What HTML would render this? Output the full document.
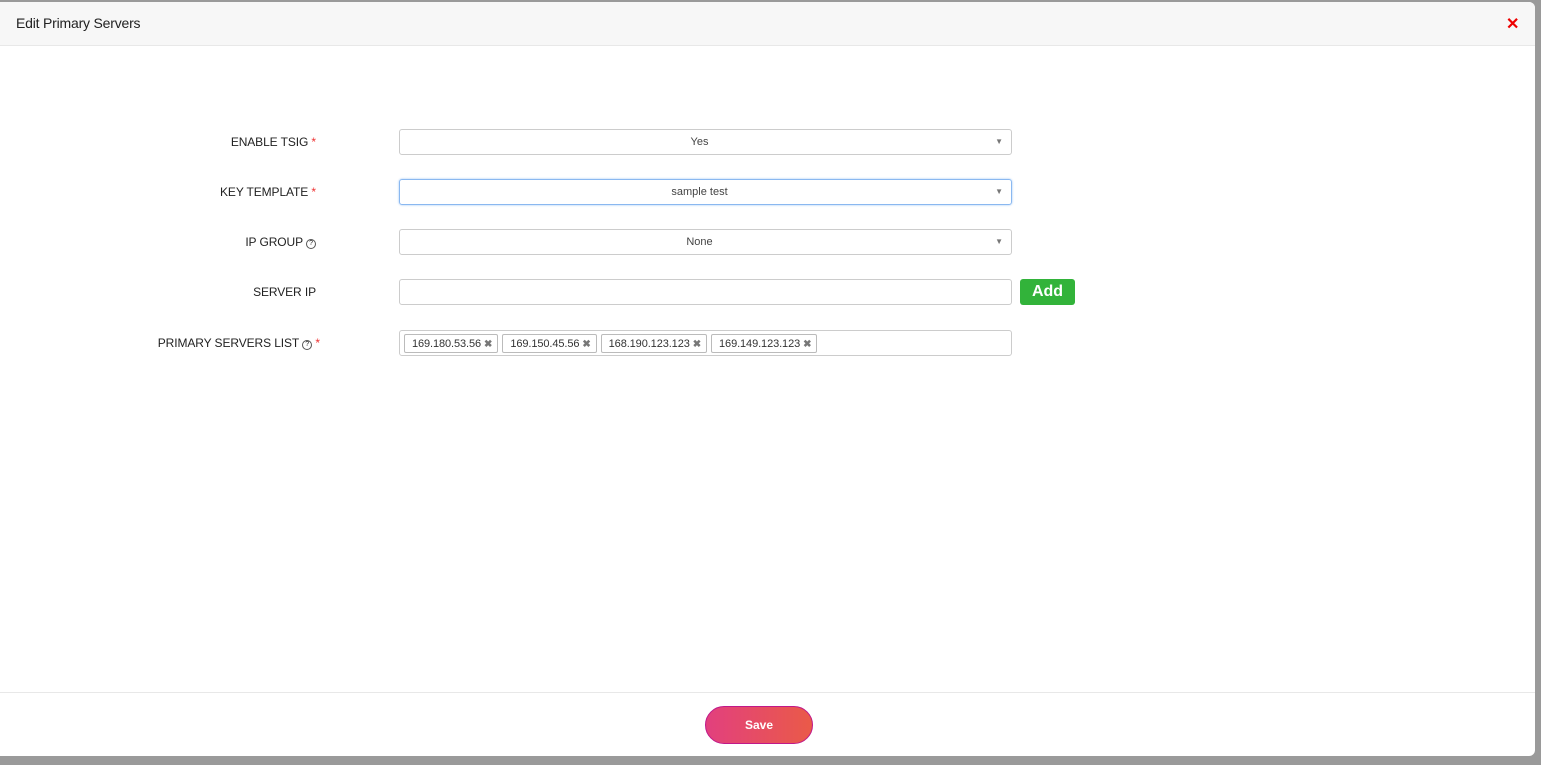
<!DOCTYPE html>
<html><head><style>
body{margin:0;width:1541px;height:765px;background:#9a9a9a;font-family:"Liberation Sans",sans-serif;position:relative;overflow:hidden}
.modal{position:absolute;left:0;top:2px;width:1535px;height:754px;background:#fff;border-radius:0 6px 6px 0}
.hdr{height:43px;background:#f7f7f7;border-bottom:1px solid #e8e8e8;border-radius:0 6px 0 0;position:relative}
.hdr span{position:absolute;left:16px;top:13px;font-size:14px;color:#222;letter-spacing:-.2px}
.close{position:absolute;left:1506px;top:12px;color:#e00;font-size:16px;font-weight:bold}
.lbl{position:absolute;font-size:12px;color:#222;text-align:right;letter-spacing:-.1px}
.req{color:#e33}
.sel{position:absolute;left:399px;width:599px;padding-right:12px;height:24px;border:1px solid #ccc;border-radius:3px;font-size:11px;color:#444;text-align:center;line-height:24px}
.sel .ar{position:absolute;right:8px;top:0;font-size:8px;color:#777}
.q{display:inline-block;width:8px;height:8px;border:1px solid #555;border-radius:50%;font-size:7px;line-height:8px;text-align:center;vertical-align:1px}
.tag{display:inline-block;border:1px solid #bbb;border-radius:2px;height:19px;line-height:18px;font-size:11px;color:#333;padding:0 5px 0 7px;margin:3px 0 0 4px;box-sizing:border-box;letter-spacing:-.1px}
.tag b{color:#777;font-size:10px;margin-left:3px}
.foot{position:absolute;left:0;top:692px;width:1535px;border-top:1px solid #e8e8e8}
.save{position:absolute;left:705px;top:706px;width:106px;height:36px;border:1px solid #c0188a;border-radius:19px;background:linear-gradient(90deg,#e2407e,#ea5a48);color:#fff;font-weight:bold;font-size:12px;text-align:center;line-height:36px}
</style></head><body>
<div class="modal">
<div class="hdr"><span>Edit Primary Servers</span><div class="close">✕</div></div>
</div>
<div class="lbl" style="left:180px;top:135px;width:136px">ENABLE TSIG <span class="req">*</span></div>
<div class="sel" style="top:129px">Yes<span class="ar">▼</span></div>
<div class="lbl" style="left:180px;top:185px;width:136px">KEY TEMPLATE <span class="req">*</span></div>
<div class="sel" style="top:179px;border-color:#8ab8f0;box-shadow:0 0 2px #9cc4f4">sample test<span class="ar">▼</span></div>
<div class="lbl" style="left:180px;top:235px;width:136px">IP GROUP <span class="q">?</span></div>
<div class="sel" style="top:229px">None<span class="ar">▼</span></div>
<div class="lbl" style="left:180px;top:285px;width:136px">SERVER IP</div>
<div class="sel" style="top:279px"></div>
<div style="position:absolute;left:1020px;top:279px;width:55px;height:26px;background:#32b33a;border-radius:3px;color:#fff;font-size:16px;font-weight:bold;text-align:center;line-height:26px">Add</div>
<div class="lbl" style="left:120px;top:336px;width:200px">PRIMARY SERVERS LIST <span class="q">?</span> <span class="req">*</span></div>
<div class="sel" style="top:330px;text-align:left;line-height:normal;padding-right:0;width:611px"><span class="tag">169.180.53.56<b>✖</b></span><span class="tag">169.150.45.56<b>✖</b></span><span class="tag">168.190.123.123<b>✖</b></span><span class="tag">169.149.123.123<b>✖</b></span></div>
<div class="foot"></div>
<div class="save">Save</div>
</body></html>
